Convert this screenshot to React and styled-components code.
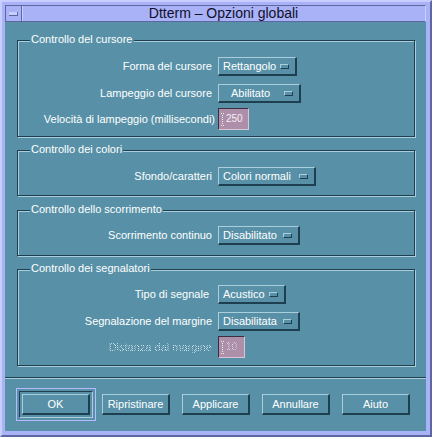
import React from "react";
import styled, { createGlobalStyle, css } from "styled-components";

const C = {
  teal: "#5891a7",
  light: "#a9cedc",
  dark: "#1d3f4f",
  lav: "#a9b1f7",
  lavLight: "#c8ceff",
  lavDark: "#5f67a3",
  ring: "#b4bcff",
  field: "#ae8fa9",
  fieldDark: "#3b2f3f",
  fieldLight: "#d9c6d5",
  text: "#ffffff",
};

const GlobalStyle = createGlobalStyle`
  html, body {
    margin: 0;
    padding: 0;
    background: ${C.lav};
  }
  body {
    font-family: "Liberation Sans", Arial, sans-serif;
  }
`;

const stipple = css`
  color: transparent;
  background: repeating-conic-gradient(#e6f1f6 0 25%, transparent 0 50%) 0 0 / 2px 2px;
  -webkit-background-clip: text;
  background-clip: text;
`;

const Window = styled.div`
  box-sizing: border-box;
  width: 432px;
  height: 437px;
  display: flex;
  flex-direction: column;
  background: ${C.lav};
  border: 2px solid;
  border-color: ${C.lavLight} ${C.lavDark} ${C.lavDark} ${C.lavLight};
  padding: 3px 4px 4px 3px;
`;

const TitleBar = styled.div`
  display: flex;
  box-sizing: border-box;
  height: 17px;
  border-top: 1px solid ${C.lavDark};
  border-left: 1px solid ${C.lavDark};
  border-bottom: 1px solid ${C.lavDark};
  border-right: 1px solid ${C.lavLight};
`;

const MenuButton = styled.div`
  width: 15px;
  display: flex;
  align-items: center;
  justify-content: center;
  border-right: 1px solid ${C.lavDark};
  box-shadow: 1px 0 0 ${C.lavLight};
`;

const MenuGlyph = styled.span`
  box-sizing: border-box;
  width: 9px;
  height: 4px;
  background: ${C.lavLight};
  border-bottom: 1px solid ${C.lavDark};
  border-right: 1px solid ${C.lavDark};
`;

const Title = styled.div`
  flex: 1;
  text-align: center;
  font-size: 14px;
  line-height: 15px;
  color: #10102a;
  white-space: nowrap;
`;

const Content = styled.div`
  flex: 1;
  display: flex;
  flex-direction: column;
  background: ${C.teal};
`;

const Groups = styled.div`
  display: flex;
  flex-direction: column;
  padding: 18px 11px 0 12px;
`;

const Group = styled.section`
  position: relative;
  display: flex;
  flex-direction: column;
  margin-top: ${(p) => p.$gap || 0}px;
  padding: ${(p) => p.$pt}px 0 ${(p) => p.$pb}px;
  border: 1px solid ${C.dark};
  box-shadow: inset 1px 1px 0 ${C.light}, 1px 1px 0 ${C.light};
`;

const Legend = styled.span`
  position: absolute;
  top: -8px;
  left: 12px;
  padding: 0 1px;
  background: ${C.teal};
  color: ${C.text};
  font-size: 11px;
  line-height: 13px;
  white-space: nowrap;
`;

const Row = styled.div`
  display: flex;
  align-items: center;
  height: ${(p) => p.$h}px;
  margin-top: ${(p) => p.$mt || 0}px;
`;

const Label = styled.span`
  flex-shrink: 0;
  width: ${(p) => 194 + (p.$nudge || 0)}px;
  margin-right: ${(p) => 6 - (p.$nudge || 0)}px;
  text-align: right;
  font-size: 11px;
  line-height: 13px;
  color: ${C.text};
  white-space: nowrap;
  ${(p) => p.$disabled && stipple}
`;

const OptionMenu = styled.div`
  box-sizing: border-box;
  width: ${(p) => p.$w}px;
  height: 19px;
  display: flex;
  align-items: center;
  padding-left: 4px;
  background: ${C.teal};
  border-top: 1px solid ${C.light};
  border-left: 1px solid ${C.light};
  border-bottom: 2px solid ${C.dark};
  border-right: 2px solid ${C.dark};
  color: ${C.text};
  font-size: 11px;
`;

const OptionText = styled.span`
  flex: 1;
  padding-left: ${(p) => p.$indent || 0}px;
  line-height: 14px;
  white-space: nowrap;
`;

const Indicator = styled.span`
  box-sizing: border-box;
  width: 9px;
  height: 5px;
  margin-right: 6px;
  border-top: 1px solid ${C.light};
  border-left: 1px solid ${C.light};
  border-bottom: 1px solid ${C.dark};
  border-right: 1px solid ${C.dark};
`;

const Field = styled.div`
  box-sizing: border-box;
  width: ${(p) => p.$w}px;
  height: 22px;
  display: flex;
  align-items: center;
  gap: 1px;
  padding-left: 2px;
  background: ${C.field};
  border: 1px solid;
  border-color: ${C.fieldDark} ${C.fieldLight} ${C.fieldLight} ${C.fieldDark};
  color: #f4eef4;
  font-size: 10px;
  line-height: 12px;
`;

const FieldText = styled.span`
  ${(p) => p.$disabled && stipple}
`;

const Separator = styled.div`
  margin-top: 11px;
  height: 1px;
  background: ${C.dark};
  box-shadow: 0 1px 0 ${C.light};
`;

const ButtonRow = styled.div`
  display: flex;
  align-items: center;
  gap: 6px;
  margin-top: 10px;
  padding-left: 11px;
`;

const DefaultRing = styled.div`
  display: flex;
  padding: 2px;
  border: 1px solid ${C.ring};
`;

const DefaultShadow = styled.div`
  display: flex;
  padding: 2px;
  border: 1px solid;
  border-color: ${C.dark} ${C.light} ${C.light} ${C.dark};
`;

const PushButton = styled.button`
  box-sizing: border-box;
  width: 68px;
  height: 21px;
  padding: 0;
  margin: 0;
  background: ${C.teal};
  border-top: 1px solid ${C.light};
  border-left: 1px solid ${C.light};
  border-bottom: 2px solid ${C.dark};
  border-right: 2px solid ${C.dark};
  color: ${C.text};
  font-family: inherit;
  font-size: 11px;
  line-height: 13px;
  cursor: pointer;

  & + & {
    margin-left: 6px;
  }
`;

const IBeam = () => (
  <svg width="4" height="13" viewBox="0 0 4 13" aria-hidden="true">
    <g fill="#f4eef4">
      <rect x="0" y="0" width="1" height="1" />
      <rect x="2" y="0" width="1" height="1" />
      <rect x="1" y="2" width="1" height="1" />
      <rect x="1" y="4" width="1" height="1" />
      <rect x="1" y="6" width="1" height="1" />
      <rect x="1" y="8" width="1" height="1" />
      <rect x="1" y="10" width="1" height="1" />
      <rect x="0" y="12" width="1" height="1" />
      <rect x="2" y="12" width="1" height="1" />
    </g>
  </svg>
);

const Option = ({ label, value, w, indent, mt, nudge }) => (
  <Row $h={19} $mt={mt}>
    <Label $nudge={nudge}>{label}</Label>
    <OptionMenu $w={w}>
      <OptionText $indent={indent}>{value}</OptionText>
      <Indicator />
    </OptionMenu>
  </Row>
);

const TextRow = ({ label, value, w, mt, nudge, disabled }) => (
  <Row $h={22} $mt={mt}>
    <Label $nudge={nudge} $disabled={disabled}>
      {label}
    </Label>
    <Field $w={w}>
      <IBeam />
      <FieldText $disabled={disabled}>{value}</FieldText>
    </Field>
  </Row>
);

export default function App() {
  return (
    <>
      <GlobalStyle />
      <Window>
        <TitleBar>
          <MenuButton>
            <MenuGlyph />
          </MenuButton>
          <Title>Dtterm – Opzioni globali</Title>
        </TitleBar>
        <Content>
          <Groups>
            <Group $pt={16} $pb={6}>
              <Legend>Controllo del cursore</Legend>
              <Option label="Forma del cursore" value="Rettangolo" w={79} />
              <Option
                label="Lampeggio del cursore"
                value="Abilitato"
                w={83}
                indent={8}
                mt={8}
              />
              <TextRow
                label="Velocità di lampeggio (millisecondi)"
                value="250"
                w={31}
                mt={5}
                nudge={3}
              />
            </Group>

            <Group $gap={13} $pt={16} $pb={9}>
              <Legend>Controllo dei colori</Legend>
              <Option label="Sfondo/caratteri" value="Colori normali" w={98} />
            </Group>

            <Group $gap={14} $pt={15} $pb={10}>
              <Legend>Controllo dello scorrimento</Legend>
              <Option label="Scorrimento continuo" value="Disabilitato" w={82} />
            </Group>

            <Group $gap={13} $pt={15} $pb={7}>
              <Legend>Controllo dei segnalatori</Legend>
              <Option label="Tipo di segnale" value="Acustico" w={68} nudge={-3} />
              <Option
                label="Segnalazione del margine"
                value="Disabilitata"
                w={82}
                mt={8}
              />
              <TextRow
                label="Distanza dal margine"
                value="10"
                w={27}
                mt={5}
                disabled
              />
            </Group>
          </Groups>

          <Separator />

          <ButtonRow>
            <DefaultRing>
              <DefaultShadow>
                <PushButton>OK</PushButton>
              </DefaultShadow>
            </DefaultRing>
            <PushButton>Ripristinare</PushButton>
            <PushButton>Applicare</PushButton>
            <PushButton>Annullare</PushButton>
            <PushButton>Aiuto</PushButton>
          </ButtonRow>
        </Content>
      </Window>
    </>
  );
}
